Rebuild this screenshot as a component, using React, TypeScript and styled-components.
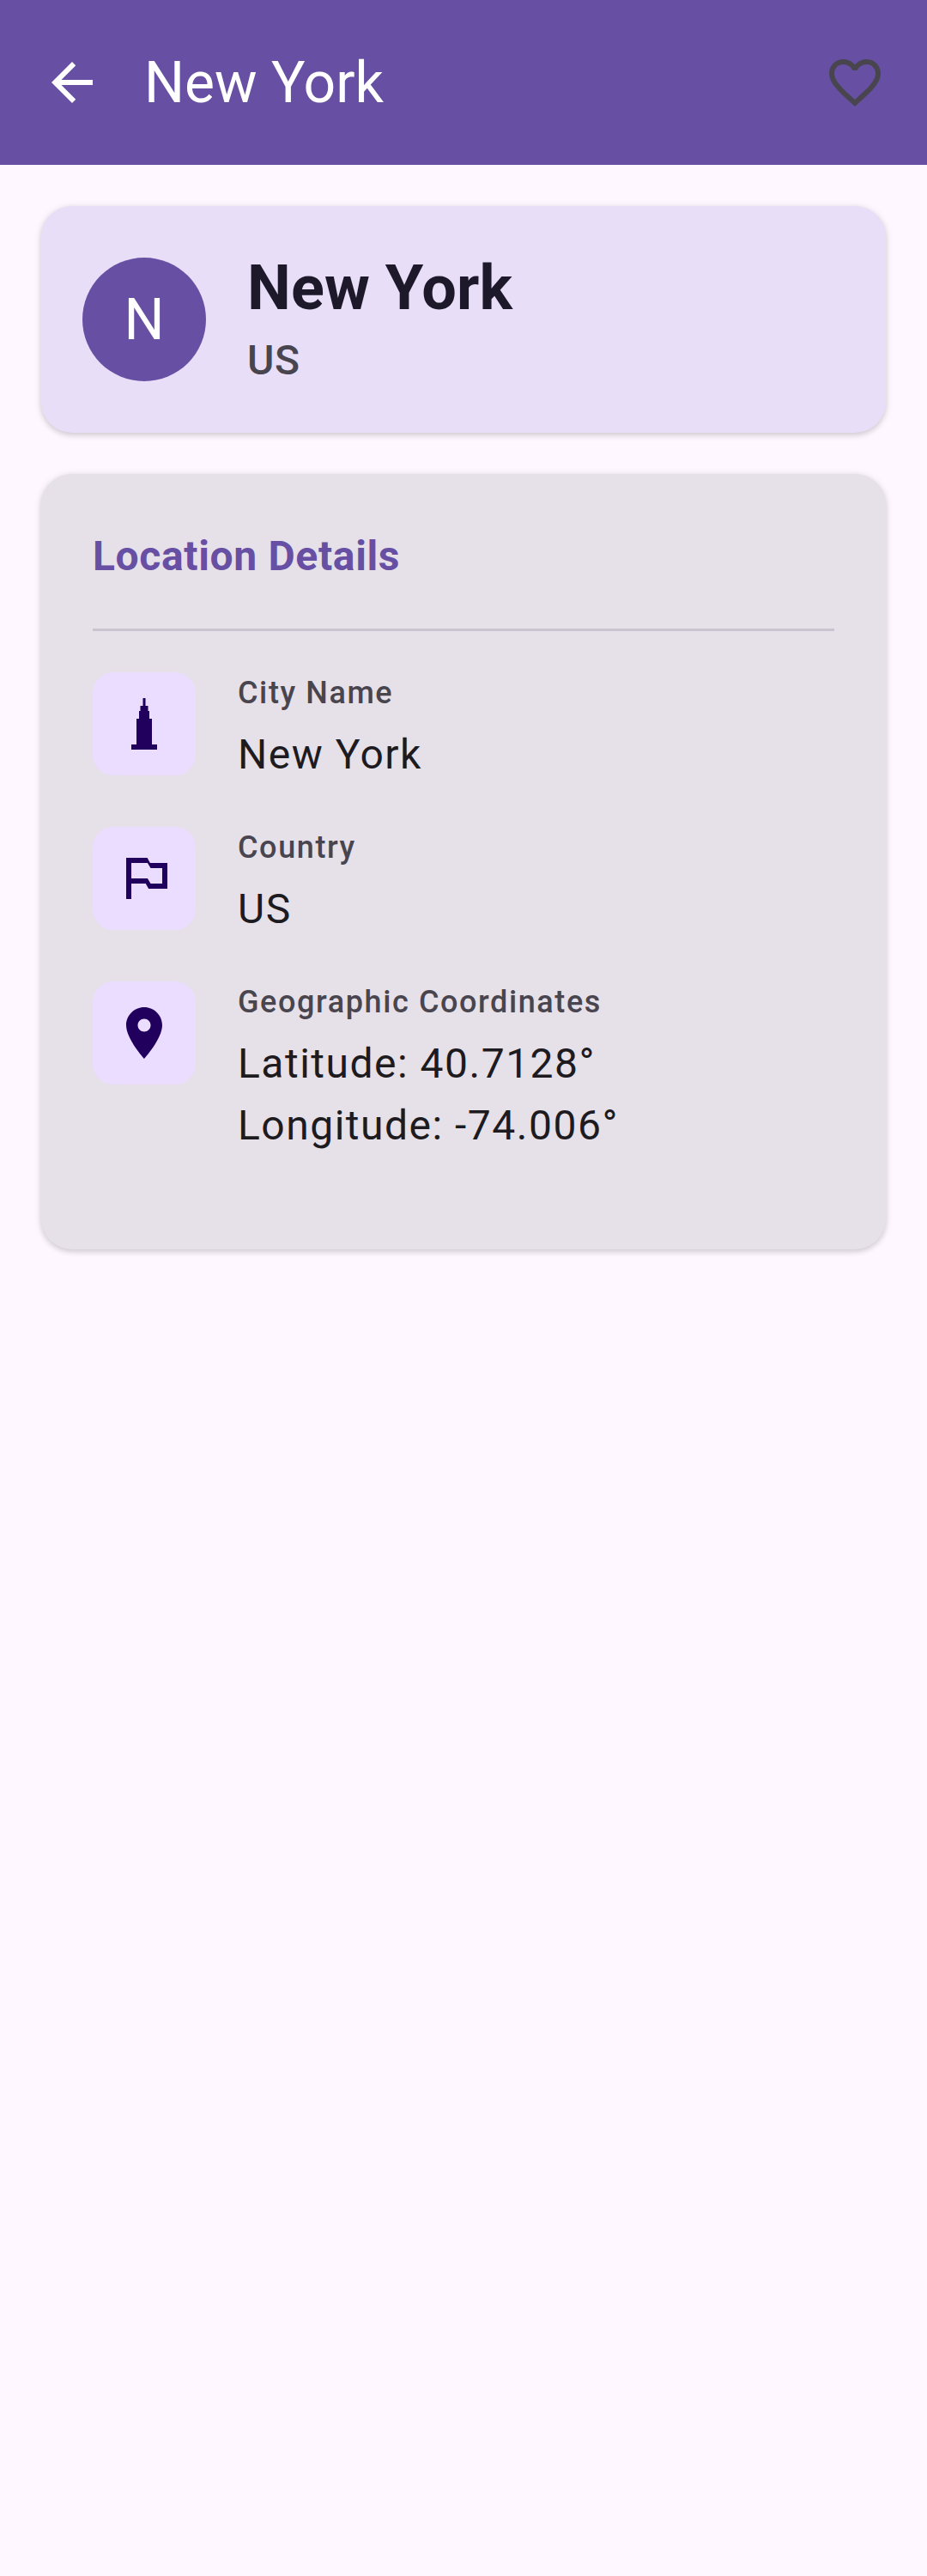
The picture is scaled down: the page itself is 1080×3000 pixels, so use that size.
import React from 'react';
import styled, { createGlobalStyle } from 'styled-components';

const GlobalStyle = createGlobalStyle`
  * { box-sizing: border-box; }
  body {
    margin: 0;
    background: #fef7ff;
    font-family: Roboto, "Noto Sans", sans-serif;
  }
`;

const Screen = styled.div`
  width: 1080px;
  min-height: 3000px;
  background: #fef7ff;
`;

const TopBar = styled.header`
  display: flex;
  align-items: center;
  gap: 48px;
  height: 192px;
  padding: 0 48px;
  background: #6750a4;
`;

const IconButton = styled.button<{ $color: string }>`
  display: flex;
  padding: 0;
  border: 0;
  background: none;
  color: ${({ $color }) => $color};
`;

const Icon = styled.svg`
  display: block;
  width: 72px;
  height: 72px;
  fill: currentColor;
`;

const BarTitle = styled.h1`
  flex: 1;
  margin: 0;
  padding-top: 2px;
  color: #fff;
  font-size: 66px;
  font-weight: 400;
  line-height: 84px;
`;

const Content = styled.main`
  display: flex;
  flex-direction: column;
  gap: 48px;
  padding: 48px;
`;

const Card = styled.section`
  border-radius: 36px;
  box-shadow: 0 3px 6px rgba(0, 0, 0, 0.12), 0 1px 10px rgba(0, 0, 0, 0.1);
`;

const SummaryCard = styled(Card)`
  display: flex;
  align-items: center;
  gap: 48px;
  padding: 48px;
  background: #e8def8;
`;

const Avatar = styled.div`
  display: flex;
  align-items: center;
  justify-content: center;
  width: 144px;
  height: 144px;
  padding-top: 2px;
  border-radius: 50%;
  background: #6750a4;
  color: #fff;
  font-size: 66px;
  line-height: 84px;
`;

const CityHeading = styled.h2`
  margin: 0;
  color: #1d192b;
  font-size: 72px;
  font-weight: 700;
  line-height: 96px;
  letter-spacing: 0.1px;
`;

const CountryCode = styled.div`
  color: #49454f;
  font-size: 48px;
  font-weight: 500;
  line-height: 72px;
  letter-spacing: 0.6px;
`;

const DetailsCard = styled(Card)`
  padding: 60px;
  background: #e6e0e9;
`;

const DetailsTitle = styled.h3`
  margin: 0;
  color: #6750a4;
  font-size: 48px;
  font-weight: 700;
  line-height: 72px;
  letter-spacing: 0.65px;
`;

const Divider = styled.hr`
  height: 3px;
  margin: 48px 0;
  border: 0;
  background: #cac4d0;
`;

const DetailList = styled.div`
  display: flex;
  flex-direction: column;
  gap: 48px;
  padding-bottom: 48px;
`;

const DetailRow = styled.div`
  display: flex;
  align-items: flex-start;
  gap: 49px;
`;

const IconTile = styled.div`
  display: flex;
  align-items: center;
  justify-content: center;
  width: 120px;
  height: 120px;
  border-radius: 24px;
  background: #eaddff;
  color: #21005d;
`;

const Label = styled.div`
  margin-bottom: 12px;
  color: #49454f;
  font-size: 36px;
  font-weight: 500;
  line-height: 48px;
  letter-spacing: 1.6px;
`;

const Value = styled.div`
  color: #1d1b20;
  font-size: 48px;
  line-height: 72px;
  letter-spacing: 1.5px;
`;

const details = [
  {
    label: 'City Name',
    values: ['New York'],
    path: 'M7 22v-2h2V10h1V7h.5V5h1V2h1v3h1v2h.5v3h1v10h2v2z',
  },
  {
    label: 'Country',
    values: ['US'],
    path: 'M5 20V4h8.2l1.100 2H21v10h-7.300l-1.100-2H7v6zM7 12h6.300l1.200 2H19V8h-4.500l-1.200-2H7z',
  },
  {
    label: 'Geographic Coordinates',
    values: ['Latitude: 40.7128°', 'Longitude: -74.006°'],
    path: 'M12 2C8.13 2 5 5.13 5 9c0 5.25 7 13 7 13s7-7.75 7-13c0-3.87-3.13-7-7-7zm0 9.500c-1.380 0-2.500-1.120-2.500-2.500s1.120-2.500 2.500-2.500 2.500 1.120 2.500 2.500-1.120 2.500-2.500 2.500z',
  },
];

export default function App() {
  return (
    <Screen>
      <GlobalStyle />
      <TopBar>
        <IconButton $color="#fff" aria-label="Back">
          <Icon viewBox="0 0 24 24">
            <path d="M20 11H7.830l5.590-5.590L12 4l-8 8 8 8 1.410-1.410L7.830 13H20v-2z" />
          </Icon>
        </IconButton>
        <BarTitle>New York</BarTitle>
        <IconButton $color="#49454f" aria-label="Favorite">
          <Icon viewBox="0 0 24 24">
            <path d="M16.5 3c-1.740 0-3.410.81-4.500 2.090C10.910 3.810 9.240 3 7.500 3 4.420 3 2 5.420 2 8.500c0 3.780 3.400 6.860 8.550 11.540L12 21.350l1.450-1.320C18.600 15.360 22 12.280 22 8.500 22 5.420 19.580 3 16.500 3zm-4.400 15.550l-.1.100-.1-.1C7.140 14.240 4 11.390 4 8.500 4 6.500 5.500 5 7.500 5c1.540 0 3.040.99 3.570 2.360h1.870C13.460 5.990 14.960 5 16.500 5c2 0 3.500 1.500 3.500 3.500 0 2.890-3.140 5.740-7.900 10.050z" />
          </Icon>
        </IconButton>
      </TopBar>
      <Content>
        <SummaryCard>
          <Avatar>N</Avatar>
          <div>
            <CityHeading>New York</CityHeading>
            <CountryCode>US</CountryCode>
          </div>
        </SummaryCard>
        <DetailsCard>
          <DetailsTitle>Location Details</DetailsTitle>
          <Divider />
          <DetailList>
            {details.map(({ label, values, path }) => (
              <DetailRow key={label}>
                <IconTile>
                  <Icon viewBox="0 0 24 24">
                    <path d={path} />
                  </Icon>
                </IconTile>
                <div>
                  <Label>{label}</Label>
                  {values.map((value) => (
                    <Value key={value}>{value}</Value>
                  ))}
                </div>
              </DetailRow>
            ))}
          </DetailList>
        </DetailsCard>
      </Content>
    </Screen>
  );
}
